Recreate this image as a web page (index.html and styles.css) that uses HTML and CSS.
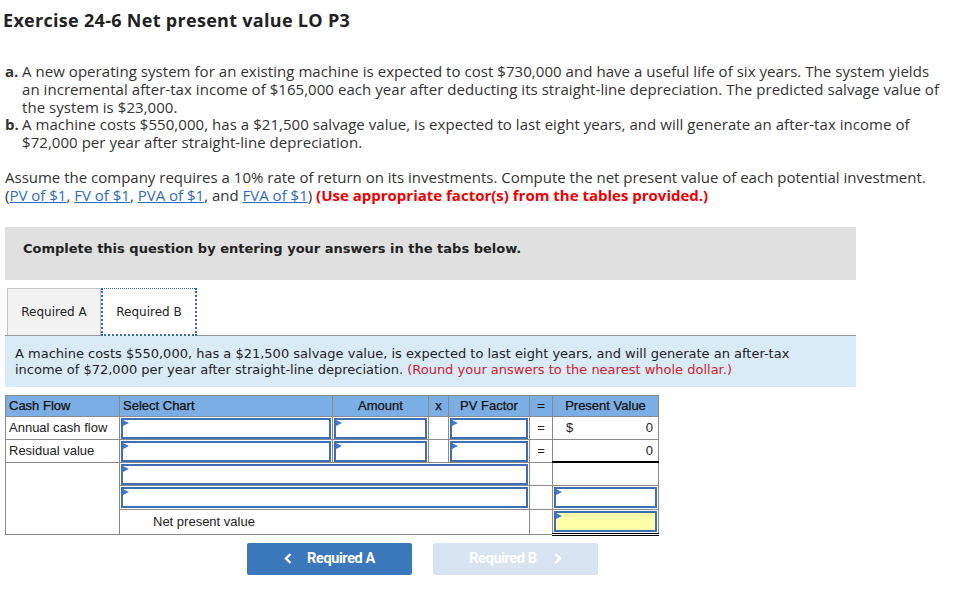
FILE: index.html
```html
<!DOCTYPE html>
<html>
<head>
<meta charset="utf-8">
<link rel="stylesheet" href="styles.css">
</head>
<body>
<h1 class="title">Exercise 24-6 Net present value LO P3</h1>
<div class="items">
  <div class="item"><span class="mk">a.</span><span class="tx">A new operating system for an existing machine is expected to cost $730,000 and have a useful life of six years. The system yields an incremental after-tax income of $165,000 each year after deducting its straight-line depreciation. The predicted salvage value of the system is $23,000.</span></div>
  <div class="item"><span class="mk">b.</span><span class="tx">A machine costs $550,000, has a $21,500 salvage value, is expected to last eight years, and will generate an after-tax income of $72,000 per year after straight-line depreciation.</span></div>
</div>
<p class="assume">Assume the company requires a 10% rate of return on its investments. Compute the net present value of each potential investment. (<a href="#">PV of $1</a>, <a href="#">FV of $1</a>, <a href="#">PVA of $1</a>, and <a href="#">FVA of $1</a>) <b class="red">(Use appropriate factor(s) from the tables provided.)</b></p>

<div class="wrap">
  <div class="banner">Complete this question by entering your answers in the tabs below.</div>
  <div class="tabs">
    <div class="tab">Required A</div>
    <div class="tab active">Required B</div>
  </div>
  <div class="info">A machine costs $550,000, has a $21,500 salvage value, is expected to last eight years, and will generate an after-tax income of $72,000 per year after straight-line depreciation. <span class="round">(Round your answers to the nearest whole dollar.)</span></div>

  <table class="grid">
    <colgroup>
      <col class="c1"><col class="c2"><col class="c3"><col class="c4"><col class="c5"><col class="c6"><col class="c7">
    </colgroup>
    <tr class="head">
      <th class="l">Cash Flow</th><th class="l">Select Chart</th><th>Amount</th><th>x</th><th>PV Factor</th><th>=</th><th>Present Value</th>
    </tr>
    <tr>
      <td class="lbl">Annual cash flow</td>
      <td class="in"><div class="box"></div></td>
      <td class="in"><div class="box"></div></td>
      <td></td>
      <td class="in"><div class="box"></div></td>
      <td class="eq">=</td>
      <td class="pv"><span>$</span><span>0</span></td>
    </tr>
    <tr>
      <td class="lbl">Residual value</td>
      <td class="in"><div class="box"></div></td>
      <td class="in"><div class="box"></div></td>
      <td></td>
      <td class="in"><div class="box"></div></td>
      <td class="eq">=</td>
      <td class="pv under"><span></span><span>0</span></td>
    </tr>
    <tr>
      <td rowspan="3"></td>
      <td colspan="4" class="in"><div class="box"></div></td>
      <td></td>
      <td></td>
    </tr>
    <tr class="tall">
      <td colspan="4" class="in"><div class="box"></div></td>
      <td></td>
      <td class="in"><div class="box"></div></td>
    </tr>
    <tr class="tall">
      <td colspan="4" class="npv">Net present value</td>
      <td></td>
      <td class="in dbl"><div class="box yellow"></div></td>
    </tr>
  </table>

  <div class="nav">
    <button class="btn prev"><svg class="chev l" width="8" height="11" viewBox="0 0 8 11"><path d="M6.5 1 L2 5.5 L6.5 10" fill="none" stroke="#fff" stroke-width="2.4"/></svg>Required A</button>
    <button class="btn next">Required B<svg class="chev r" width="8" height="11" viewBox="0 0 8 11"><path d="M1.5 1 L6 5.5 L1.5 10" fill="none" stroke="#fff" stroke-width="2.4"/></svg></button>
  </div>
</div>
</body>
</html>
```

FILE: styles.css
```css
html, body { margin: 0; padding: 0; background: #fff; }
body {
  padding: 0 5px;
  font-family: "Open Sans", "Liberation Sans", sans-serif;
  color: #333;
}
.title {
  margin: 0 0 0 -2px;
  padding-top: 10px;
  font-size: 18px;
  line-height: 20px;
  font-weight: 700;
  letter-spacing: 0.3px;
  color: #222;
}
.items {
  margin-top: 33px;
  font-size: 15px;
  letter-spacing: 0.05px;
  line-height: 17.75px;
}
.item { display: flex; }
.mk { width: 17px; flex: none; font-weight: 700; }
.tx { flex: 1; padding-right: 28px; }
.assume {
  margin: 16px 0 0;
  font-size: 15px;
  line-height: 18px;
  max-width: 935px;
}
.assume a { color: #2f6ebc; text-decoration: underline; }
.red { color: #e00; font-weight: 700; }

.wrap { width: 851px; }
.banner {
  margin-top: 23px;
  height: 53px;
  box-sizing: border-box;
  padding: 13px 18px 0;
  background: #e0e0e0;
  font-family: "DejaVu Sans", Verdana, sans-serif;
  font-weight: 700;
  font-size: 13px;
  line-height: 18px;
  color: #222;
}
.tabs {
  margin-top: 8px;
  display: flex;
  padding-left: 2px;
  border-bottom: 1px solid #999;
  height: 47px;
}
.tab {
  font-family: "DejaVu Sans", Verdana, sans-serif;
  font-size: 12px;
  color: #222;
  display: flex;
  align-items: center;
  justify-content: center;
  box-sizing: border-box;
  height: 47px;
  padding-top: 1px;
}
.tab:first-child {
  width: 94px;
  background: #f2f2f2;
  border: 1px solid #c4c4c4;
  border-bottom: none;
}
.tab.active {
  width: 96px;
  background: #fff;
  border: 1px dotted #2f6ebc;
  border-width: 1px 2px 2px 2px;
  height: 48px;
  margin-bottom: -1px;
}
.info {
  background: #daebf8;
  height: 51px;
  box-sizing: border-box;
  padding: 10px 24px 0 10px;
  font-family: "DejaVu Sans", Verdana, sans-serif;
  font-size: 13px;
  line-height: 16px;
  color: #222;
}
.round { color: #d0202a; }

.grid {
  margin-top: 8px;
  border-collapse: collapse;
  table-layout: fixed;
  width: 653px;
  font-family: "Liberation Sans", Arial, sans-serif;
  font-size: 13px;
  color: #222;
}
.c1 { width: 114px; } .c2 { width: 213px; } .c3 { width: 96px; } .c4 { width: 20px; }
.c5 { width: 81px; } .c6 { width: 23px; } .c7 { width: 106px; }
.grid th, .grid td {
  border: 1px solid #8a8a8a;
  padding: 0;
}
.grid .head th {
  background: #7aaee4;
  font-weight: 400;
  height: 21px;
  box-sizing: border-box;
  text-align: center;
  color: #111;
  -webkit-text-stroke: 0.25px #111;
}
.grid .head th.l { text-align: left; padding-left: 3px; }
.grid td.lbl { padding-left: 3px; }
.grid td.eq { text-align: center; }
.grid td.in { padding: 1px 1px 0; }
.grid tr.tall td.in { padding: 1px; }
.box {
  position: relative;
  height: 21px;
  box-sizing: border-box;
  border: 2px solid #3f6fb2;
  background: #fff;
}
.box::before {
  content: "";
  position: absolute;
  left: 0;
  top: 0;
  border-left: 6px solid #3a7bcc;
  border-top: 3.5px solid transparent;
  border-bottom: 3.5px solid transparent;
}
.box.yellow { background: #ffffaa; }
.grid td.pv { padding: 0 5px 0 13px; }
.pv span:first-child { float: left; }
.pv span:last-child { float: right; }
.grid td.under { border-bottom: 2px solid #000; }
.grid td.dbl { border-bottom: 3px double #000; }
.grid td.npv { padding-left: 33px; }

.nav {
  display: flex;
  gap: 21px;
  padding-left: 242px;
  margin-top: 7px;
}
.btn {
  width: 165px;
  height: 32px;
  border: none;
  border-radius: 2px;
  font-family: Roboto, "Liberation Sans", sans-serif;
  font-weight: 700;
  font-size: 14.5px;
  color: #fff;
  letter-spacing: -0.4px;
  display: flex;
  align-items: center;
  justify-content: center;
  padding: 0;
}
.prev { background: #3a77bb; }
.next { background: #d8e4f2; }
.chev { display: block; }
.chev.l { margin-right: 15px; }
.chev.r { margin-left: 17px; }
```
